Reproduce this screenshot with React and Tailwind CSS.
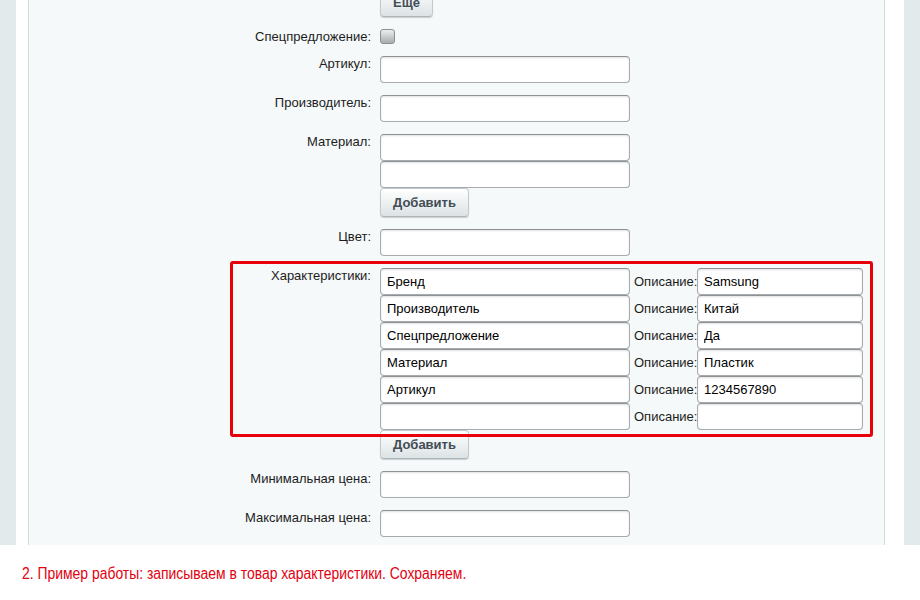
import React from 'react';

const font = { fontFamily: '"Liberation Sans", Arial, sans-serif' };

const Field = ({ value = '', className = 'w-[250px]' }) => (
  <input
    type="text"
    defaultValue={value}
    className={`${className} h-[27px] bg-white border border-[#a7abad] border-t-[#8e9294] rounded-[4px] px-[6px] text-[13px] text-black outline-none shadow-[inset_0_1px_2px_rgba(0,0,0,0.12)]`}
  />
);

const Button = ({ children, className = '' }) => (
  <button
    type="button"
    className={`h-[29px] px-[12px] rounded-[4px] border border-[#c3cacd] border-b-[#aeb6b9] bg-gradient-to-b from-[#ffffff] to-[#dce3e5] text-[13px] font-bold text-[#434d55] shadow-[0_1px_1px_rgba(0,0,0,0.18)] ${className}`}
  >
    {children}
  </button>
);

const Row = ({ label, children }) => (
  <div className="flex mb-[12px]">
    <div className="w-[343px] text-right text-[13px] leading-[15px] text-[#1c1c1c] pr-[1px]">{label}</div>
    <div className="ml-[8px] flex flex-col items-start">{children}</div>
  </div>
);

const props = [
  ['Бренд', 'Samsung'],
  ['Производитель', 'Китай'],
  ['Спецпредложение', 'Да'],
  ['Материал', 'Пластик'],
  ['Артикул', '1234567890'],
  ['', ''],
];

export default function App() {
  return (
    <div className="relative w-full h-[600px] bg-white overflow-hidden" style={font}>
      <div className="flex h-[545px]">
        <div className="w-[16px] bg-[#e2eaeb]" />
        <div className="w-[12px] bg-white" />
        <div className="flex-1 flex flex-col bg-[#f5f9f9] border-x border-[#d3dcde] overflow-hidden">
          <div className="flex-1">
            <div className="flex mb-[12px]">
              <div className="w-[343px]" />
              <div className="ml-[8px] -mt-[12px]">
                <Button className="px-[12px]">Еще</Button>
              </div>
            </div>

            <div className="flex mb-[12px] items-center">
              <div className="w-[343px] text-right text-[13px] leading-[15px] text-[#1c1c1c] pr-[1px]">Спецпредложение:</div>
              <div className="ml-[8px] w-[15px] h-[15px] rounded-[3px] border border-[#8a8f92] bg-gradient-to-b from-[#eceeee] to-[#a9adb0]" />
            </div>

            <Row label="Артикул:">
              <Field />
            </Row>
            <Row label="Производитель:">
              <Field />
            </Row>
            <Row label="Материал:">
              <Field />
              <Field />
              <Button>Добавить</Button>
            </Row>
            <Row label="Цвет:">
              <Field />
            </Row>
            <Row label="Характеристики:">
              {props.map(([name, desc], i) => (
                <div key={i} className="flex items-center">
                  <Field value={name} />
                  <span className="ml-[4px] text-[13px] text-[#1c1c1c] w-[63px]">Описание:</span>
                  <Field value={desc} className="w-[166px]" />
                </div>
              ))}
              <Button>Добавить</Button>
            </Row>
            <Row label="Минимальная цена:">
              <Field />
            </Row>
            <Row label="Максимальная цена:">
              <Field />
            </Row>
          </div>
          <div className="h-[9px] bg-gradient-to-b from-[#f5f9f9] to-[#dbe4e5] border-b border-[#cfd9db]" />
        </div>
        <div className="w-[19px] bg-white" />
        <div className="w-[16px] bg-[#e2eaeb]" />
      </div>

      <p className="mt-[17px] pl-[22px]">
        <span
          className="inline-block origin-left scale-x-[0.87] text-[16px] text-[#e3000f]"
          style={{ fontFamily: '"Liberation Sans Narrow", "Arial Narrow", "Liberation Sans", sans-serif' }}
        >
          2. Пример работы: записываем в товар характеристики. Сохраняем.
        </span>
      </p>

      <div className="absolute left-[230px] top-[261px] w-[643px] h-[176px] border-[3px] border-[#e8000b] rounded-[3px] pointer-events-none" />
    </div>
  );
}
